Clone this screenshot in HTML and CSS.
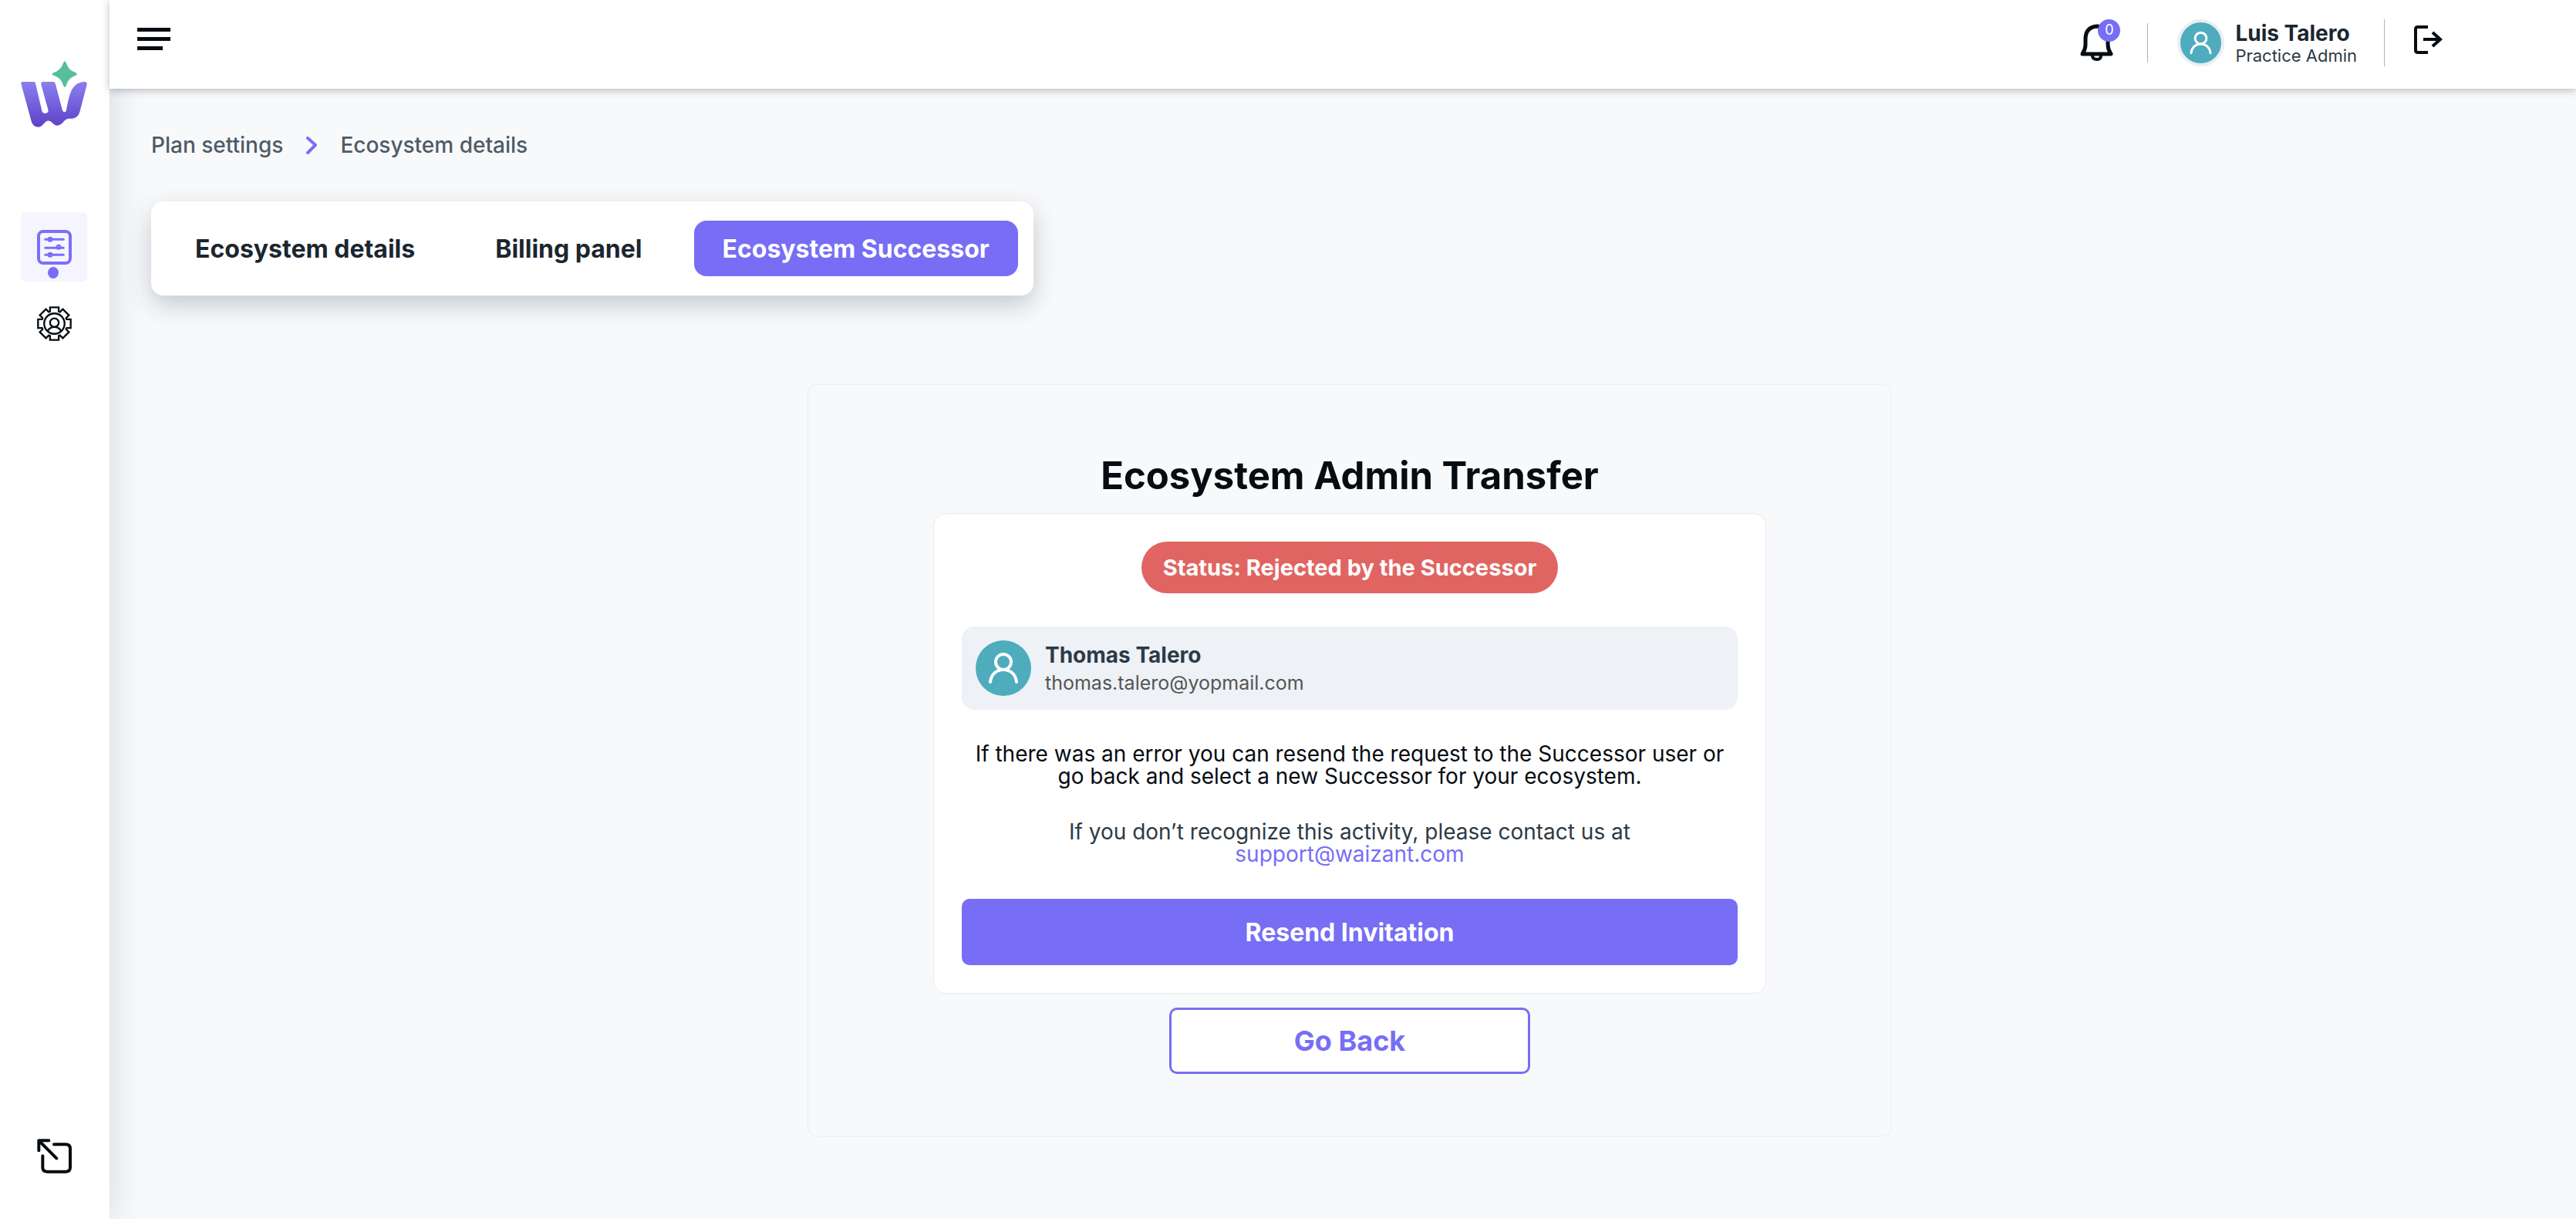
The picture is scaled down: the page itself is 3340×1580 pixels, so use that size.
FILE: index.html
```html
<!DOCTYPE html>
<html lang="en">
<head>
<meta charset="utf-8">
<meta name="viewport" content="width=device-width, initial-scale=1">
<title>Ecosystem Successor</title>
<link rel="stylesheet" href="styles.css">
</head>
<body>
<div class="app">
  <nav class="sidebar" aria-label="Main">
    <a class="logo" href="#" aria-label="Home">
      <svg viewBox="81 86 258 258" aria-hidden="true">
        <defs>
          <linearGradient id="logo-fill" x1="0" y1="0" x2="0" y2="1">
            <stop offset="0" stop-color="#8b7ff0"/>
            <stop offset="1" stop-color="#5c42c6"/>
          </linearGradient>
        </defs>
        <path fill="url(#logo-fill)" d="M86 167H132Q137 167 138 172L164 284Q168 290 177 290Q187 289 188 279L160 178Q159 167 166 167H206Q213 167 215 173L243 279Q246 285 251 285Q257 284 258 277Q266 230 275 208Q290 168 330 167Q339 167 338 178L310 285Q303 309 280 310H266Q257 311 249 320Q236 337 223 337Q213 337 202 325Q190 314 178 322L168 332Q160 343 148 343Q128 342 122 321L83 178Q80 167 86 167Z"/>
        <path fill="#57be9b" d="M252 87Q257 90 262 104Q268 120 285 127Q300 133 300 137Q300 141 285 147Q268 155 261 172Q256 188 252 188Q248 188 243 172Q236 155 219 147Q203 141 202 137Q203 133 219 127Q236 118 243 102Q248 88 252 87Z"/>
      </svg>
    </a>
    <a class="side-link side-link-active" href="#" aria-label="Plan settings">
      <svg class="side-icon" viewBox="144 114 135 135" fill="none" stroke="#7a6ff8" stroke-linecap="round" aria-hidden="true">
        <rect x="150" y="120" width="123" height="123" rx="18" stroke-width="12"/>
        <path d="M176 151H247M176 184H247M176 211H247" stroke-width="9"/>
        <g stroke-width="7"><circle cx="195" cy="151" r="7"/><circle cx="228" cy="181" r="7"/><circle cx="195" cy="211" r="7"/></g>
      </svg>
    </a>
    <a class="side-link" href="#" aria-label="Account settings">
      <svg class="side-icon" viewBox="-68 -68 136 136" fill="none" stroke="#050c12" stroke-width="7" aria-hidden="true">
        <path d="M-17-48V-64H17V-48L22-46L33-57L57-33L46-22L48-17H64V17H48L46 22L57 33L33 57L22 46L17 48V64H-17V48L-22 46L-33 57L-57 33L-46 22L-48 17H-64V-17H-48L-46-22L-57-33L-33-57L-22-46Z"/>
        <circle r="40"/>
        <circle cy="-4" r="17"/>
        <path d="M-27 29Q-18 13 0 13Q18 13 27 29"/>
      </svg>
    </a>
    <a class="side-exit" href="#" aria-label="Open previous site">
      <svg class="side-icon" viewBox="144 108 135 135" fill="none" stroke="#050c12" stroke-width="12" stroke-linecap="round" stroke-linejoin="round" aria-hidden="true">
        <path d="M210 130H256Q273 130 273 147V220Q273 236 256 236H183Q166 236 166 220V175M220 184L152 116M190 115H151V154"/>
      </svg>
    </a>
  </nav>

  <div class="page">
    <header class="topbar">
      <button class="icon-button" type="button" aria-label="Toggle menu">
        <svg class="menu-icon" viewBox="0 0 43 30" aria-hidden="true"><path fill="#050c12" d="M0 0H43V5H0ZM0 12H43V17H0ZM0 24H33V29H0Z"/></svg>
      </button>
      <div class="topbar-right">
        <button class="icon-button bell" type="button" aria-label="Notifications">
          <svg class="bell-icon" viewBox="0 0 43 49" fill="none" stroke="#050c12" stroke-width="5" stroke-linejoin="round" stroke-linecap="round" aria-hidden="true">
            <path d="M3 39Q7 33 7 27V20Q7 4 22 3Q36 4 36 20V27Q36 33 40 39Z"/><path d="M16 41Q16 46 22 46Q27 46 27 41" stroke-width="4"/>
          </svg>
          <span class="badge">0</span>
        </button>
        <span class="divider divider-short"></span>
        <div class="account">
          <span class="avatar avatar-ring">
            <svg viewBox="0 0 72 72" fill="none" stroke="#fff" stroke-width="4" stroke-linecap="round" aria-hidden="true"><circle cx="36" cy="28" r="10"/><path d="M19 54C20 44 27 38 36 38S52 44 53 54"/></svg>
          </span>
          <div class="account-text">
            <span class="account-name">Luis Talero</span>
            <span class="account-role">Practice Admin</span>
          </div>
        </div>
        <span class="divider"></span>
        <button class="icon-button logout" type="button" aria-label="Log out">
          <svg class="logout-icon" viewBox="0 0 37 37" fill="none" stroke="#050c12" stroke-width="4" aria-hidden="true"><path d="M18 2H5Q2 2 2 5V32Q2 35 5 35H18M12 18H34M24 9L34 18L24 27"/></svg>
        </button>
      </div>
    </header>

    <main class="content">
      <nav class="breadcrumb" aria-label="Breadcrumb">
        <a href="#">Plan settings</a>
        <svg class="chevron" viewBox="0 0 14 23" fill="none" stroke="#7a6ff8" stroke-width="4" stroke-linecap="round" stroke-linejoin="round" aria-hidden="true"><path d="M2 2L12 11L2 21"/></svg>
        <a href="#" aria-current="page">Ecosystem details</a>
      </nav>

      <div class="tabs" role="tablist">
        <button class="tab" type="button" role="tab" aria-selected="false">Ecosystem details</button>
        <button class="tab" type="button" role="tab" aria-selected="false">Billing panel</button>
        <button class="tab tab-active" type="button" role="tab" aria-selected="true">Ecosystem Successor</button>
      </div>

      <section class="transfer">
        <h1 class="transfer-title">Ecosystem Admin Transfer</h1>
        <div class="card">
          <span class="status">Status: Rejected by the Successor</span>
          <div class="successor">
            <span class="avatar">
              <svg viewBox="0 0 72 72" fill="none" stroke="#fff" stroke-width="4" stroke-linecap="round" aria-hidden="true"><circle cx="36" cy="28" r="10"/><path d="M19 54C20 44 27 38 36 38S52 44 53 54"/></svg>
            </span>
            <div class="successor-text">
              <span class="successor-name">Thomas Talero</span>
              <span class="successor-email">thomas.talero@yopmail.com</span>
            </div>
          </div>
          <p class="message message-strong">If there was an error you can resend the request to the Successor user or<br>go back and select a new Successor for your ecosystem.</p>
          <p class="message">If you don’t recognize this activity, please contact us at<br><a href="mailto:support@waizant.com">support@waizant.com</a></p>
          <button class="resend" type="button">Resend Invitation</button>
        </div>
        <button class="go-back" type="button">Go Back</button>
      </section>
    </main>
  </div>
</div>
</body>
</html>
```
FILE: styles.css
```css
* {
  box-sizing: border-box;
}

body {
  margin: 0;
  background: #f8f9fb;
  color: #1b262f;
  font-family: Inter, "Open Sans", sans-serif;
  font-size: 28px;
}

button {
  border: 0;
  padding: 0;
  background: none;
  color: inherit;
  font: inherit;
  cursor: pointer;
}

a {
  color: inherit;
  text-decoration: none;
}

svg {
  display: block;
}

.app {
  display: grid;
  grid-template-columns: 142px 1fr;
  min-height: 100vh;
}

/* Sidebar */
.sidebar {
  display: flex;
  flex-direction: column;
  align-items: center;
  padding: 79px 2px 59px 0;
  background: #fff;
  box-shadow: 0 0 48px rgba(20, 30, 45, 0.16);
}

.logo {
  width: 86px;
  margin-bottom: 110px;
}

.side-link {
  display: flex;
  justify-content: center;
  width: 86px;
  height: 90px;
  padding-top: 23px;
  border-radius: 6px;
}

.side-link + .side-link {
  margin-top: 9px;
}

.side-link-active {
  position: relative;
  background: #f6f5ff;
}

.side-link-active::after {
  content: "";
  position: absolute;
  bottom: 4px;
  left: 35px;
  width: 14px;
  height: 15px;
  border-radius: 50%;
  background: #776ef5;
}

.side-icon {
  width: 45px;
  height: 45px;
}

.side-exit {
  margin-top: auto;
}

/* Top bar */
.page {
  min-width: 0;
}

.topbar {
  position: relative;
  display: flex;
  align-items: flex-start;
  justify-content: space-between;
  height: 115px;
  padding: 25px 173px 0 36px;
  background: #fff;
  box-shadow: 0 2px 10px rgba(20, 35, 45, 0.3);
}

.menu-icon {
  width: 43px;
  height: 30px;
  margin-top: 11px;
}

.topbar-right {
  display: flex;
  align-items: center;
}

.bell {
  position: relative;
  margin-right: 44px;
}

.bell-icon {
  width: 43px;
  height: 49px;
}

.badge {
  position: absolute;
  top: -6px;
  right: -9px;
  width: 29px;
  height: 29px;
  border-radius: 50%;
  background: #776ef5;
  color: #fff;
  font-size: 18px;
  line-height: 28px;
  text-align: center;
}

.divider {
  width: 1px;
  height: 61px;
  margin-right: 38px;
  background: #a9b4bd;
}

.divider-short {
  height: 51px;
}

.account {
  display: flex;
  align-items: center;
  gap: 14px;
  margin-right: 35px;
}

.avatar {
  flex: none;
  width: 72px;
  height: 72px;
  border-radius: 50%;
  background: #4eacbd;
}

.avatar-ring {
  width: 61px;
  height: 61px;
  border: 4px solid #e9eef5;
}

.account-text,
.successor-text {
  display: flex;
  flex-direction: column;
}

.account-name {
  font-size: 28px;
  font-weight: 700;
  line-height: 32px;
}

.account-role {
  color: #2d3a46;
  font-size: 22px;
  line-height: 26px;
}

.logout {
  align-self: flex-start;
  margin-top: 8px;
}

.logout-icon {
  width: 37px;
  height: 37px;
}

/* Content */
.content {
  display: flex;
  flex-direction: column;
  align-items: flex-start;
  padding: 54px 36px 106px 54px;
}

.breadcrumb {
  display: flex;
  align-items: center;
  gap: 30px;
  margin-bottom: 54px;
  color: #4e5b66;
  font-weight: 500;
  line-height: 38px;
}

.chevron {
  width: 14px;
  height: 23px;
}

.tabs {
  display: flex;
  gap: 30px;
  padding: 25px 20px;
  border-radius: 16px;
  background: #fff;
  box-shadow: 0 12px 32px rgba(20, 40, 50, 0.22);
}

.tab {
  height: 72px;
  padding: 0 37px;
  border-radius: 16px;
  font-size: 32px;
  font-weight: 700;
}

.tab-active {
  background: #776ef5;
  color: #fff;
}

.transfer {
  display: flex;
  flex-direction: column;
  align-items: center;
  align-self: center;
  width: 100%;
  max-width: 1406px;
  margin-top: 115px;
  padding: 80px;
  border: 1px solid #ebedf5;
  border-radius: 12px;
}

.transfer-title {
  margin: 0 0 10px;
  color: #050c12;
  font-size: 49px;
  font-weight: 700;
  line-height: 76px;
}

.card {
  display: flex;
  flex-direction: column;
  align-items: center;
  gap: 43px;
  width: 100%;
  max-width: 1080px;
  padding: 36px;
  border: 1px solid #e8ebf1;
  border-radius: 16px;
  background: #fff;
}

.status {
  padding: 0 28px;
  border-radius: 34px;
  background: #e06562;
  color: #fff;
  font-size: 29px;
  font-weight: 700;
  line-height: 67px;
}

.successor {
  display: flex;
  align-items: center;
  gap: 18px;
  width: 100%;
  padding: 18px;
  border-radius: 16px;
  background: #eef1f6;
}

.successor-name {
  color: #2d3a46;
  font-weight: 700;
  line-height: 38px;
}

.successor-email {
  color: #555;
  font-size: 25px;
  line-height: 34px;
}

.message {
  margin: 0;
  color: #2d3a46;
  line-height: 29px;
  text-align: center;
}

.message-strong {
  color: #050c12;
}

.message a {
  color: #776ef5;
}

.resend,
.go-back {
  height: 86px;
  border-radius: 10px;
  font-weight: 700;
}

.resend {
  width: 100%;
  background: #776ef5;
  color: #fff;
  font-size: 32px;
}

.go-back {
  width: 468px;
  margin-top: 18px;
  border: 3px solid #776ef5;
  background: #fff;
  color: #776ef5;
  font-size: 36px;
}
```
